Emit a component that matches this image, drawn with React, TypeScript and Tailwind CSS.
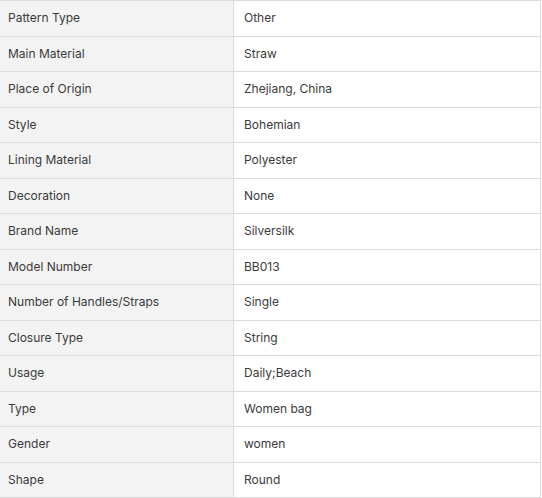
const ROWS: [string, string][] = [
  ['Pattern Type', 'Other'],
  ['Main Material', 'Straw'],
  ['Place of Origin', 'Zhejiang, China'],
  ['Style', 'Bohemian'],
  ['Lining Material', 'Polyester'],
  ['Decoration', 'None'],
  ['Brand Name', 'Silversilk'],
  ['Model Number', 'BB013'],
  ['Number of Handles/Straps', 'Single'],
  ['Closure Type', 'String'],
  ['Usage', 'Daily;Beach'],
  ['Type', 'Women bag'],
  ['Gender', 'women'],
  ['Shape', 'Round'],
]

export default function App() {
  return (
    <div className="w-[542px] h-[498px] bg-white font-['Inter',sans-serif] text-[12px] text-[#3a3a3a]">
      <div className="w-[541px] border-r border-b border-[#dcdcdc]">
        {ROWS.map(([label, value], i) => (
          <div
            key={label}
            className={`flex border-t border-[#dcdcdc] ${i % 2 === 0 ? 'h-[36px]' : 'h-[35px]'}`}
          >
            <div className="w-[234px] shrink-0 bg-[#f3f3f3] border-r border-[#dcdcdc] pl-[8px] pb-[1px] flex items-center">
              {label}
            </div>
            <div className="flex-1 pl-[10px] pb-[1px] flex items-center">{value}</div>
          </div>
        ))}
      </div>
    </div>
  )
}
